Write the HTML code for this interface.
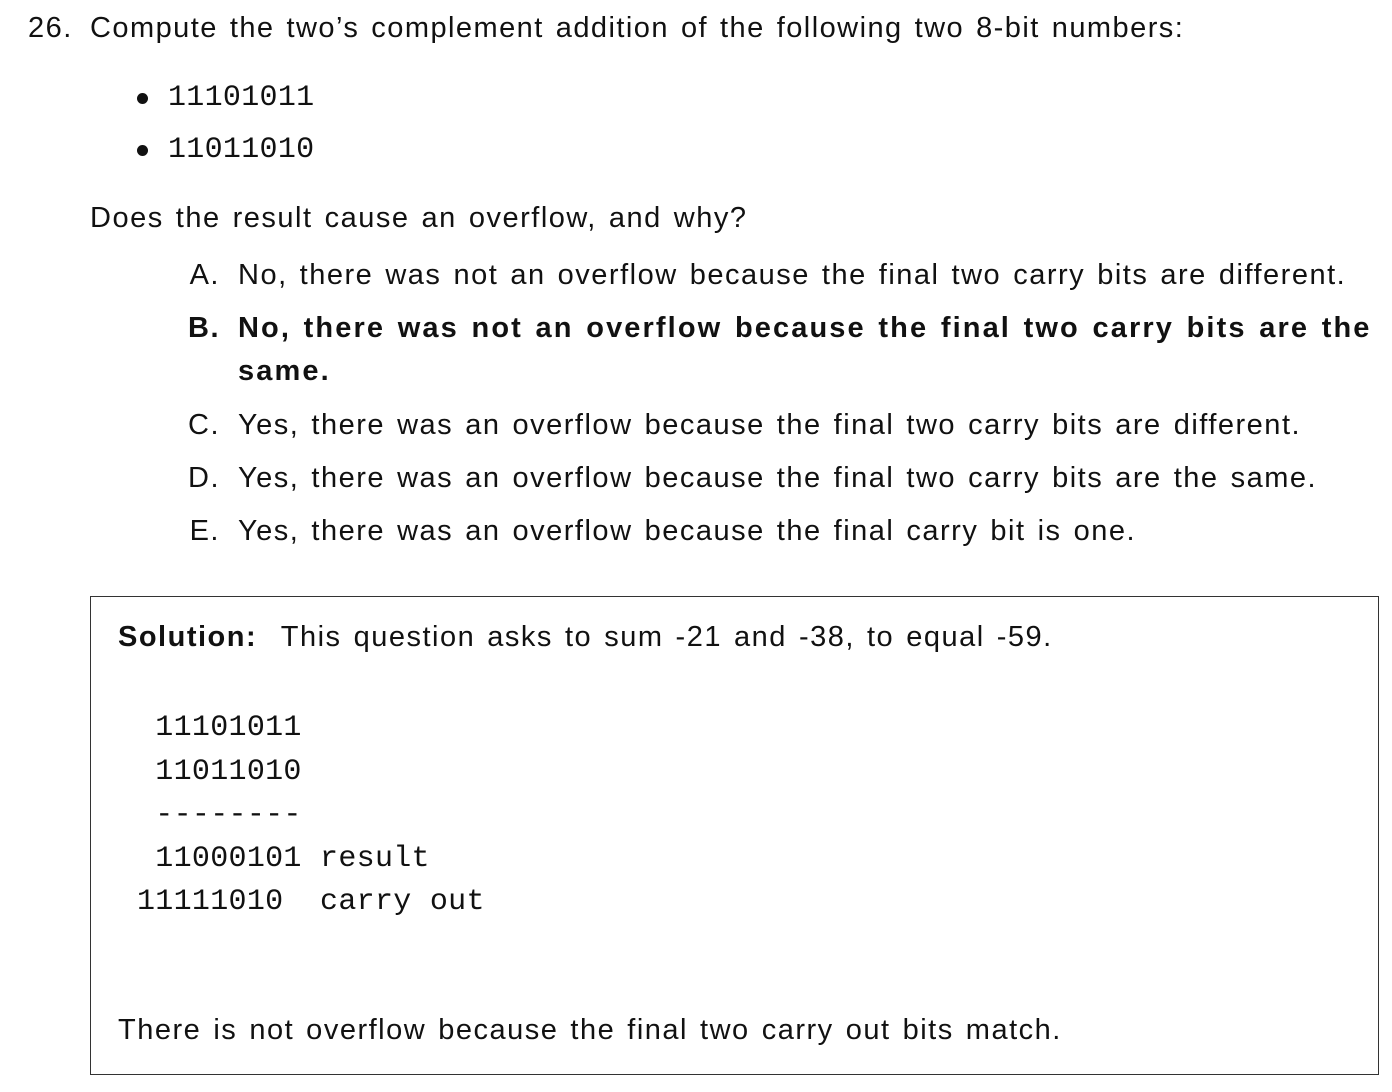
<!DOCTYPE html>
<html><head><meta charset="utf-8"><style>
body{margin:0;width:1392px;height:1092px;background:#fff;position:relative;overflow:hidden;font-family:"Liberation Sans",sans-serif;font-size:29px;color:#111}
.t{position:absolute;line-height:34px;white-space:nowrap;letter-spacing:1.5px;word-spacing:2.5px}
.m{font-family:"Liberation Mono",monospace;font-size:30px;letter-spacing:0.3px;word-spacing:0}
.l{text-align:right;width:50px}
b{font-weight:bold}
.box{position:absolute;left:90px;top:596px;width:1289px;height:479px;border:1px solid #333;box-sizing:border-box}
.dot{position:absolute;width:11px;height:11px;border-radius:50%;background:#111}
</style></head><body>
<div class="t" style="left:28px;top:11px">26.</div>
<div class="t" style="left:90px;top:11px;letter-spacing:1.45px">Compute the two’s complement addition of the following two 8-bit numbers:</div>
<div class="dot" style="left:137px;top:93px"></div><div class="t m" style="left:168px;top:81px">11101011</div>
<div class="dot" style="left:137px;top:145px"></div><div class="t m" style="left:168px;top:133px">11011010</div>
<div class="t" style="left:90px;top:201px">Does the result cause an overflow, and why?</div>
<div class="t l" style="left:170px;top:258px">A.</div><div class="t" style="left:238px;top:258px">No, there was not an overflow because the final two carry bits are different.</div>
<div class="t l" style="left:170px;top:311px"><b>B.</b></div><div class="t" style="left:238px;top:311px;letter-spacing:2.1px;word-spacing:2.5px"><b>No, there was not an overflow because the final two carry bits are the</b></div>
<div class="t" style="left:238px;top:354px;letter-spacing:2.1px"><b>same.</b></div>
<div class="t l" style="left:170px;top:408px">C.</div><div class="t" style="left:238px;top:408px">Yes, there was an overflow because the final two carry bits are different.</div>
<div class="t l" style="left:170px;top:461px">D.</div><div class="t" style="left:238px;top:461px">Yes, there was an overflow because the final two carry bits are the same.</div>
<div class="t l" style="left:170px;top:514px">E.</div><div class="t" style="left:238px;top:514px">Yes, there was an overflow because the final carry bit is one.</div>
<div class="box"></div>
<div class="t" style="left:118px;top:620px"><b>Solution:</b>&nbsp; This question asks to sum -21 and -38, to equal -59.</div>
<div class="t m" style="left:137px;top:707px;line-height:43.5px;font-size:30px"><pre style="margin:0;font:inherit"> 11101011
 11011010
 --------
 11000101 result
11111010  carry out</pre></div>
<div class="t" style="left:118px;top:1013px">There is not overflow because the final two carry out bits match.</div>
</body></html>
